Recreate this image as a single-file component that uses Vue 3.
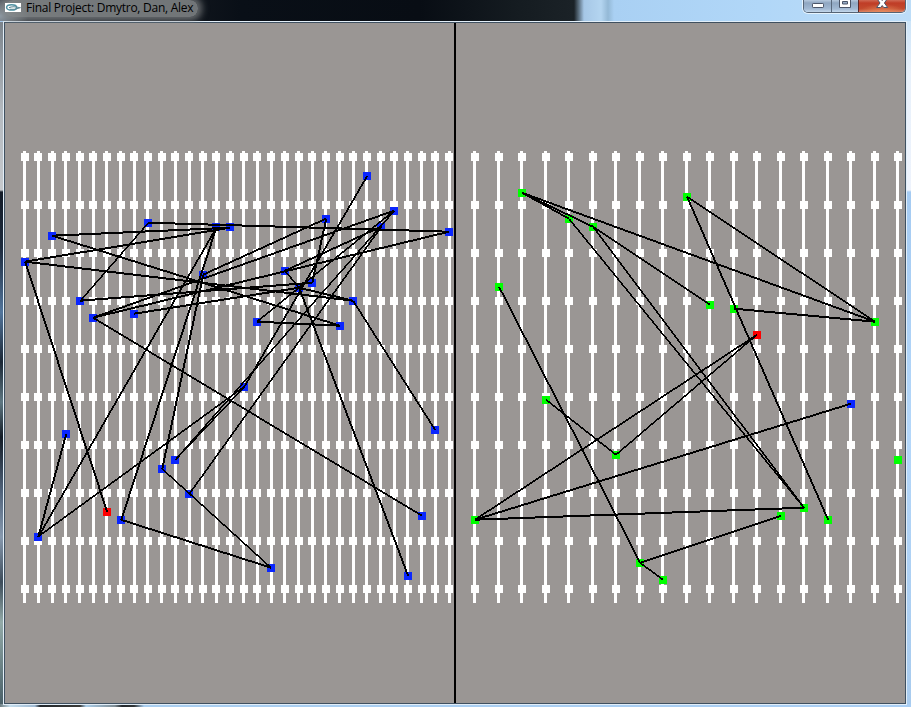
<script setup>
const rows = Array.from({ length: 10 }, (_, r) => 153 + 48 * r)

// Two-pixel wide aliased line: one cell per step along the major axis.
function rasterLine(p, q) {
  const dx = q.lx - p.lx
  const dy = q.ly - p.ly
  const n = Math.round(Math.max(Math.abs(dx), Math.abs(dy)))
  const flat = Math.abs(dx) >= Math.abs(dy)
  let d = ''
  for (let i = 0; i < n; i++) {
    const t = (i + 0.5) / n
    const x = p.lx + dx * t
    const y = p.ly + dy * t
    d += flat
      ? `M${Math.floor(x)} ${Math.round(y) - 1}h1v2h-1z`
      : `M${Math.round(x) - 1} ${Math.floor(y)}h2v1h-2z`
  }
  return d
}

function buildPane(box, count, start, railStart, step, ys, links, special, base, shift = {}) {
  const cols = Array.from({ length: count }, (_, i) => ({
    x: Math.floor(start + step * i),
    rail: Math.floor(railStart + step * i)
  }))
  const nodes = ys.map((y, i) => ({
    x: cols[i].x,
    y,
    lx: cols[i].x + 0.2,
    ly: y + (shift[i] ?? -0.3),
    color: special[i] || base
  }))
  const edges = links.map(([a, b]) => rasterLine(nodes[a], nodes[b]))
  return { box, cols, nodes, edges }
}

const BLUE = '#0a26ff'
const GREEN = '#00ff00'
const RED = '#ff0000'

const panes = [
  buildPane(
    '5 23 449 680', 32, 25.3, 23.78, 13.685,
    [262, 537, 236, 434, 301, 318, 512, 520, 314, 223, 469, 460, 494, 275, 227, 227,
      387, 322, 568, 271, 288, 283, 219, 326, 301, 176, 227, 211, 576, 516, 430, 232],
    [[9, 31], [2, 15], [0, 15], [14, 1], [14, 7], [13, 10], [13, 22], [5, 27], [5, 31],
      [5, 29], [4, 9], [4, 21], [8, 20], [0, 24], [2, 23], [20, 24], [20, 28], [19, 20],
      [25, 16], [22, 21], [27, 17], [27, 11], [26, 12], [26, 19], [16, 1], [16, 11],
      [3, 1], [0, 6], [10, 18], [7, 18], [17, 23], [24, 30]],
    { 6: RED }, BLUE, { 14: 0.7, 15: 0.7 }
  ),
  buildPane(
    '456 23 449 680', 19, 475.6, 473.6, 23.5,
    [520, 287, 193, 400, 219, 227, 455, 563, 580, 197, 305, 309, 335, 516, 508, 520, 404, 322, 460],
    [[2, 4], [2, 17], [2, 5], [5, 10], [4, 14], [5, 14], [1, 7], [3, 6], [6, 12], [0, 12],
      [0, 16], [0, 14], [7, 13], [7, 8], [9, 17], [9, 15], [11, 17]],
    { 12: RED, 16: BLUE }, GREEN
  )
]
</script>

<template>
  <div class="window">
    <header class="titlebar">
      <div class="caption">
        <svg class="logo" width="16" height="9" viewBox="0 0 16 9">
          <rect width="16" height="9" fill="#fff" />
          <ellipse cx="6.600" cy="4.400" rx="5" ry="2.700" fill="none" stroke="#4f91a3" stroke-width="1.500" />
          <path d="M4 4.800C7 3 11 3.600 15 4.800L10 6.200H5" fill="none" stroke="#5b8794" stroke-width="1.100" />
        </svg>
        <span class="title">Final Project: Dmytro, Dan, Alex</span>
      </div>
      <div class="controls">
        <div class="btn min">
          <svg width="27" height="13" viewBox="0 0 27 13">
            <rect x="8.500" y="3.500" width="11" height="4" rx=".7" fill="#fff" stroke="#4b5568" />
          </svg>
        </div>
        <div class="btn max">
          <svg width="26" height="13" viewBox="0 0 26 13">
            <path d="M7.500-2h11v9.500h-11z M10.500 1.500v2.500h5v-2.500z" fill="#fff" fill-rule="evenodd" stroke="#4b5568" />
          </svg>
        </div>
        <div class="btn close">
          <svg width="47" height="13" viewBox="0 0 47 13">
            <path d="M18.500-2h4l1.700 2.500 1.700-2.500h4l-3.500 5 3.300 4.500h-4l-1.500-2-1.600 2h-4l3.400-4.500z" fill="#fff" stroke="#4b5568" />
          </svg>
        </div>
      </div>
    </header>

    <main class="client">
      <svg v-for="p in panes" :key="p.box" class="pane" width="449" height="680" :viewBox="p.box" shape-rendering="crispEdges">
        <g fill="#fff">
          <template v-for="(c, i) in p.cols" :key="i">
            <rect :x="c.rail" y="151" width="3" height="452" />
            <rect v-for="y in rows" :key="y" :x="c.x - 4" :y="y" width="8" height="8" />
          </template>
        </g>
        <rect v-for="(n, i) in p.nodes" :key="'n' + i" :x="n.x - 4" :y="n.y - 4" width="8" height="8" :fill="n.color" />
        <path v-for="(e, i) in p.edges" :key="'e' + i" :d="e" />
      </svg>
    </main>
  </div>
</template>

<style>
body {
  margin: 0;
  overflow: hidden;
}
</style>

<style scoped>
.window {
  box-sizing: border-box;
  width: 911px;
  height: 707px;
  padding: 0 4px 2px 3px;
  background:
    linear-gradient(90deg, #6f7f83 0, #c3dcec 10px, #9fb9d2 35px, #23282d 40px, #3a3a38 80px, #a9cce8 86px, #7e8c94 115px, #23282d 122px, #303436 134px, #a9cef0 144px, #a9cef4 911px) 0 704px / 911px 3px no-repeat,
    linear-gradient(180deg, #c8e2f8 0, #e8f1fb 60px, #eef3fc 176px, #a5cbf2 178px, #b4d7fa 420px, #a8cbee 690px) 906px 14px / 5px 690px no-repeat,
    linear-gradient(180deg, #7c848c 0, #b4bac0 90px, #c5c8cc 168px, #141c28 170px, #1d2a3c 225px, #52759c 290px, #1b2735 340px, #5e7782 380px, #131c26 415px, #51647c 470px, #8799ae 515px, #3d4c5a 560px, #93aaa8 600px, #4c626a 680px) 0 22px / 4px 682px no-repeat,
    #a9cef4;
}

.titlebar {
  display: flex;
  justify-content: space-between;
  height: 21px;
  margin: 0 -4px 0 -3px;
  padding: 0 5px 0 5px;
  background:
    radial-gradient(ellipse 28px 22px at 0 16px, rgba(165, 178, 190, .8), transparent),
    linear-gradient(90deg, #3a4046 0, #2b3037 30px, #10151c 190px, #090f17 240px, #080d14 420px, #151c21 520px, #1b2227 574px, #5f7384 579px, #a6c7e6 584px, #b4d5f0 601px, #94b9d6 608px, #a9d0f3 614px, #b1d7f8 760px, #bdddf8 911px);
}

.caption {
  display: flex;
  align-items: flex-start;
  gap: 5px;
  height: 17px;
  width: 193px;
  background: rgba(136, 139, 140, .82);
  box-shadow: 0 0 7px 4px rgba(136, 139, 140, .72);
  border-radius: 8px;
}

.logo {
  flex: none;
  margin-top: 3px;
}

.title {
  font: 12px/16px "Open Sans", "Noto Sans", sans-serif;
  letter-spacing: -.27px;
  color: #000;
  white-space: nowrap;
}

.controls {
  display: flex;
  box-sizing: border-box;
  width: 103px;
  height: 13px;
  border: 1px solid #566475;
  border-top: 0;
  border-radius: 0 0 5px 5px;
  box-shadow: 0 0 0 1px rgba(239, 248, 255, .85);
  overflow: hidden;
}

.btn {
  height: 13px;
  box-sizing: border-box;
  background: linear-gradient(180deg, #b6c9df 0, #a9bdd3 1px, #8fa6c1 3px, #a3bad4 9px, #c4d8ec 12px);
}

.btn svg {
  display: block;
}

.min {
  width: 28px;
  border-right: 1px solid #59697d;
}

.max {
  width: 27px;
  border-right: 1px solid #5d2727;
}

.close {
  width: 46px;
  background: radial-gradient(ellipse 24px 9px at 50% 100%, #e78b5d, transparent), linear-gradient(180deg, #cf6a55 0, #c03d27 3px, #c24a2e 9px, #d98265 12px);
}

.close svg {
  margin-left: -1px;
}

.client {
  display: flex;
  justify-content: space-between;
  box-sizing: border-box;
  width: 904px;
  height: 684px;
  padding: 1px;
  border: 1px solid #e2eef8;
  background: linear-gradient(#000, #000) 450px 1px / 2px 680px no-repeat, #3f5060;
}

.pane {
  display: block;
  background: #9a9694;
}
</style>
